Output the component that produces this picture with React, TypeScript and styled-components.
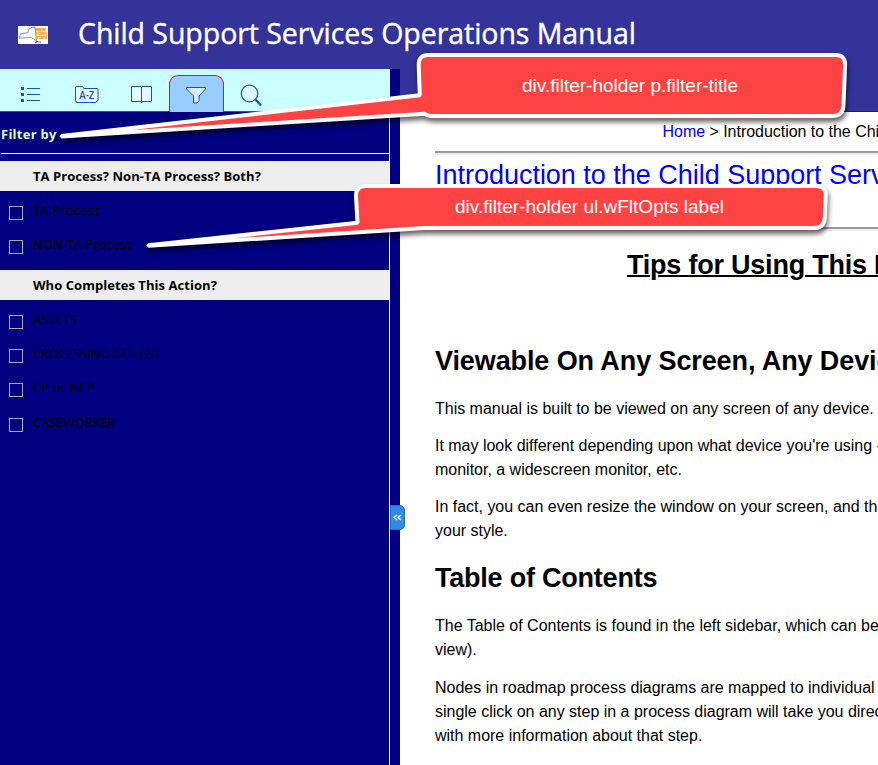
import React from "react";
import styled, { createGlobalStyle } from "styled-components";

const GlobalStyle = createGlobalStyle`
  body { margin: 0; background: #fff; overflow: hidden; }
  * { box-sizing: border-box; }
`;

const Page = styled.div`
  position: relative;
  width: 878px;
  height: 765px;
  display: flex;
  flex-direction: column;
  overflow: hidden;
  font-family: "Liberation Sans", Arial, sans-serif;
  color: #000;
`;

const Header = styled.header`
  height: 69px;
  flex: none;
  display: flex;
  align-items: center;
  gap: 30px;
  padding-left: 18px;
  background: #333399;
`;

const Title = styled.h1`
  margin: -4px 0 0;
  font: 400 28.5px/40px "Open Sans", "Noto Sans", sans-serif;
  letter-spacing: -0.05px;
  -webkit-text-stroke: 0.4px #fff;
  color: #fff;
  white-space: nowrap;
`;

const Body = styled.div`
  flex: 1;
  min-height: 0;
  display: flex;
`;

const Sidebar = styled.aside`
  width: 390px;
  flex: none;
  background: #000080;
  border-right: 1px solid #fff;
  font-family: "Open Sans", "Noto Sans", sans-serif;
`;

const Tabs = styled.nav`
  width: 390px;
  height: 43px;
  display: flex;
  align-items: flex-end;
  padding-left: 3px;
  background: #ccffff;
  border-bottom: 1px solid #e01018;
`;

const Tab = styled.button<{ $active?: boolean; $shift?: number }>`
  width: 55px;
  height: ${(p) => (p.$active ? "37px" : "36px")};
  margin: 0 0.25px ${(p) => (p.$active ? "-1px" : "0")} 0;
  padding: 0;
  display: flex;
  justify-content: center;
  align-items: flex-start;
  border: 1px solid ${(p) => (p.$active ? "#e01020" : "transparent")};
  border-bottom: 0;
  border-radius: 9px 9px 0 0;
  background: ${(p) => (p.$active ? "#99ccff" : "transparent")};
  svg {
    margin: 6px 0 0 ${(p) => (p.$shift ?? 0) * 2}px;
    flex: none;
  }
`;

const FilterTitle = styled.p`
  height: 42px;
  margin: 0 0 7px 1px;
  padding-top: 12px;
  border-bottom: 1px solid #fff;
  font-size: 13px;
  line-height: 20px;
  letter-spacing: 0.25px;
  font-weight: 700;
  color: #ccffcc;
`;

const GroupTitle = styled.h3`
  height: 30px;
  margin: 0;
  padding-left: 33px;
  background: #eeeeee;
  font-size: 13px;
  line-height: 30px;
  letter-spacing: 0.05px;
  font-weight: 700;
`;

const Options = styled.ul`
  list-style: none;
  margin: 0;
  padding: 5px 0 0 9px;
  min-height: 79px;
`;

const Option = styled.li`
  height: 34.2px;
  display: flex;
  align-items: flex-start;
  gap: 10px;
`;

const Check = styled.span`
  width: 14px;
  height: 14px;
  margin-top: 10px;
  border: 1px solid #a9a9a9;
`;

const OptionLabel = styled.label<{ $track: number }>`
  margin-top: 4px;
  font-size: 13px;
  line-height: 20px;
  letter-spacing: ${(p) => p.$track}px;
`;

const Splitter = styled.div`
  width: 10px;
  flex: none;
  background: #000080;
  display: flex;
  align-items: flex-start;
`;

const Collapse = styled.button`
  position: relative;
  width: 15px;
  height: 25px;
  flex: none;
  margin-top: 436px;
  padding: 0;
  display: flex;
  align-items: center;
  justify-content: center;
  background: #328ae2;
  border: 1px solid #1670cc;
  border-radius: 0 5px 5px 0;
`;

const Main = styled.main`
  flex: 1;
  min-width: 0;
  overflow: hidden;
  white-space: nowrap;
`;

const HeaderBand = styled.div`
  height: 43px;
  background: #333399;
  border-bottom: 1px solid #22224a;
`;

const Content = styled.div`
  width: 800px;
  padding-left: 35px;
`;

const Breadcrumb = styled.div`
  height: 39px;
  padding: 8px 0 0 227.5px;
  font-size: 16px;
  line-height: 24px;
  letter-spacing: -0.03px;
`;

const Link = styled.a`
  color: #0000ee;
`;

const Rule = styled.div`
  height: 4px;
  background: #eeeeee;
  border-top: 2px solid #999999;
`;

const TopicTitle = styled.h1`
  height: 72px;
  margin: 0;
  padding-top: 4px;
  font-size: 27px;
  line-height: 32px;
  font-weight: 400;
  letter-spacing: -0.02px;
  color: #0000ff;
`;

const Tips = styled.h2`
  margin: 18px 0 0 192px;
  font-size: 27px;
  line-height: 32px;
  letter-spacing: -0.22px;
  text-decoration: underline;
  text-decoration-thickness: 2px;
`;

const Heading = styled.h2<{ $top: number; $track: number }>`
  margin: ${(p) => p.$top}px 0 0;
  font-size: 27px;
  line-height: 32px;
  letter-spacing: ${(p) => p.$track}px;
`;

const Text = styled.p<{ $top?: number }>`
  margin: ${(p) => p.$top ?? 13}px 0 0;
  font-size: 16px;
  line-height: 24px;
  letter-spacing: -0.01px;
`;

const CalloutLayer = styled.svg`
  position: absolute;
  left: 0;
  top: 0;
  pointer-events: none;
  filter: drop-shadow(1px 4px 2.5px rgba(0, 0, 0, 0.6));
`;

const CalloutLabel = styled.div<{ $x: number; $y: number }>`
  position: absolute;
  left: ${(p) => p.$x}px;
  top: ${(p) => p.$y}px;
  font-size: 19px;
  line-height: 24px;
  color: #fff;
  white-space: nowrap;
`;

const ink = "#105ba8";

const Logo = () => (
  <svg width="30" height="18" viewBox="0 0 30 18">
    <rect width="30" height="18" fill="#fff" />
    <path d="M1 12 L2 9.5 L3.5 7.5 L8 7 L10 6.5 L10.5 4 L13 1.5 L17 1 L17.5 6 L18 11 L18.5 14.5 L17 14 L13.5 11.5 L2 12.2 Z" fill="none" stroke="#6b9ad4" strokeWidth="1" />
    <path d="M18 15.5 L23 16.3 M17 17 L20 15" stroke="#3f7fc0" strokeWidth="1.1" />
    <g fill="#f79a10" stroke="#f9a72b" strokeWidth=".35" fontFamily="Liberation Sans, sans-serif" fontWeight="700" fontSize="4.2">
      <text x="18" y="5.2" textLength="9.500" lengthAdjust="spacingAndGlyphs">NEW</text>
      <text x="18" y="9.3" textLength="11" lengthAdjust="spacingAndGlyphs">YORK</text>
      <text x="18" y="13.4" textLength="11.500" lengthAdjust="spacingAndGlyphs">STATE</text>
    </g>
  </svg>
);

const ListIcon = () => (
  <svg width="24" height="24" viewBox="0 0 24 24">
    <path d="M2 5h3v3h-3z M2 11h3v3h-3z M2 17h3v3h-3z M8 6h13v1h-13z M8 12h13v1h-13z M8 18h13v1h-13z" fill={ink} />
  </svg>
);

const IndexIcon = () => (
  <svg width="24" height="24" viewBox="0 0 24 24">
    <path d="M.5 18.5V5.5q0-1 1-1h5.500q1 0 1.300 1l.3 1H22q1 0 1 1V18l-2 2.500H2q-1.500-.2-1.500-2z" fill="#e9f8ff" stroke={ink} />
    <text x="4.300" y="17.200" fill={ink} fontFamily="Open Sans, sans-serif" fontWeight="600" fontSize="10.500" textLength="15" lengthAdjust="spacingAndGlyphs">A-Z</text>
  </svg>
);

const BookIcon = () => (
  <svg width="24" height="24" viewBox="0 0 24 24">
    <path d="M1.500 4.500H10q1.500 0 1.500 1.500q0-1.500 1.500-1.500h8.500v15H13q-1.500 0-1.500 1.500q0-1.500-1.500-1.500H1.500z M11.500 5v15.500" fill="#e4f8ff" stroke={ink} />
  </svg>
);

const FunnelIcon = () => (
  <svg width="24" height="24" viewBox="0 0 24 24">
    <path d="M2.500 5.500h19v1.500l-6.500 7v4.500l-2 2.500h-3.500v-7l-7-7z" fill="#d9ecff" stroke={ink} />
  </svg>
);

const SearchIcon = () => (
  <svg width="24" height="24" viewBox="0 0 24 24">
    <circle cx="10.500" cy="11.500" r="8.300" fill="#dcfaff" stroke={ink} strokeWidth="1.200" />
    <path d="M16.500 17.500l5.500 6" stroke={ink} strokeWidth="2.200" />
  </svg>
);

const callouts = [
  "M61.500 136 L419.800 95.300 L418.700 65 Q418.600 55 428 55 L836 55 Q845.300 55 845.100 65 L843.500 105 Q843 116 833 116 L431 116 Q427 116 424.500 113.800 L61.500 136.500 Z",
  "M148.500 245.300 L357.500 222.800 L356 196 Q356 186 365 186 L816 186 Q826 186 825.800 195 L824.800 218 Q824 228 814 228 L424 228 L148.500 245.800 Z",
];

const groups: { title: string; options: [string, number][] }[] = [
  {
    title: "TA Process? Non-TA Process? Both?",
    options: [["TA Process", 0.2], ["NON-TA Process", 0]],
  },
  {
    title: "Who Completes This Action?",
    options: [["ASSETS", 0], ["PROCESSING CENTER", -0.17], ["CP or NCP", 0], ["CASEWORKER", -0.2]],
  },
];

export default function App() {
  return (
    <Page>
      <GlobalStyle />
      <Header>
        <Logo />
        <Title>Child Support Services Operations Manual</Title>
      </Header>
      <Body>
        <Sidebar>
          <Tabs>
            <Tab><ListIcon /></Tab>
            <Tab $shift={1}><IndexIcon /></Tab>
            <Tab $shift={1}><BookIcon /></Tab>
            <Tab $active><FunnelIcon /></Tab>
            <Tab $shift={-1}><SearchIcon /></Tab>
          </Tabs>
          <FilterTitle>Filter by</FilterTitle>
          {groups.map((g) => (
            <React.Fragment key={g.title}>
              <GroupTitle>{g.title}</GroupTitle>
              <Options>
                {g.options.map(([name, track]) => (
                  <Option key={name}>
                    <Check />
                    <OptionLabel $track={track}>{name}</OptionLabel>
                  </Option>
                ))}
              </Options>
            </React.Fragment>
          ))}
        </Sidebar>
        <Splitter>
          <Collapse>
            <svg width="9" height="8" viewBox="0 0 9 8">
              <path d="M4 1L1.200 3.500L4 6M8 1L5.200 3.500L8 6" fill="none" stroke="#fff" strokeWidth="1.500" />
            </svg>
          </Collapse>
        </Splitter>
        <Main>
          <HeaderBand />
          <Content>
            <Breadcrumb><Link>Home</Link> &gt; Introduction to the Child Support Services Manual</Breadcrumb>
            <Rule />
            <TopicTitle>Introduction to the Child Support Services Manual</TopicTitle>
            <Rule />
            <Tips>Tips for Using This Manual</Tips>
            <Heading $top={64} $track={-0.1}>Viewable On Any Screen, Any Device</Heading>
            <Text $top={20}>This manual is built to be viewed on any screen of any device.</Text>
            <Text>It may look different depending upon what device you're using - a laptop<br />monitor, a widescreen monitor, etc.</Text>
            <Text>In fact, you can even resize the window on your screen, and the manual fits<br />your style.</Text>
            <Heading $top={19} $track={-0.22}>Table of Contents</Heading>
            <Text $top={20}>The Table of Contents is found in the left sidebar, which can be hidden from<br />view).</Text>
            <Text $top={14}>Nodes in roadmap process diagrams are mapped to individual topics. A<br />single click on any step in a process diagram will take you directly to a page<br />with more information about that step.</Text>
          </Content>
        </Main>
      </Body>
      <CalloutLayer width="878" height="765" viewBox="0 0 878 765">
        {callouts.map((d) => (
          <path key={d} d={d} fill="#ff4343" stroke="#fff" strokeWidth="4" strokeLinejoin="bevel" />
        ))}
      </CalloutLayer>
      <CalloutLabel $x={522} $y={74}>div.filter-holder p.filter-title</CalloutLabel>
      <CalloutLabel $x={455} $y={195}>div.filter-holder ul.wFltOpts label</CalloutLabel>
    </Page>
  );
}
